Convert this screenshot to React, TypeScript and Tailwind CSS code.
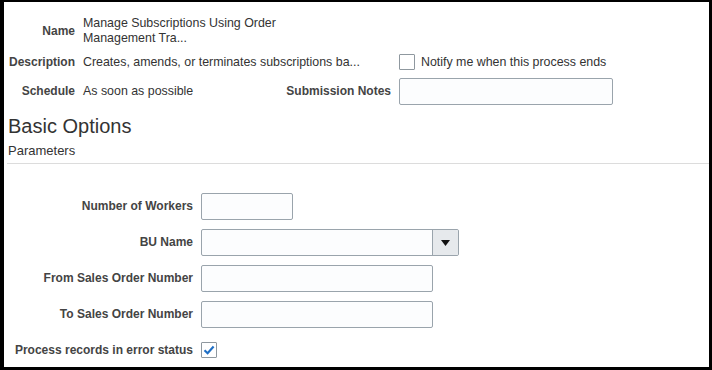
import React from 'react';

const font = { fontFamily: '"Liberation Sans", Arial, sans-serif' };

function TextBox({ className = '' }: { className?: string }) {
  return <div className={`h-[27px] rounded-[2px] border border-[#9aa4ac] bg-[#fcfdfe] ${className}`} />;
}

function Checkbox({ checked = false }: { checked?: boolean }) {
  return (
    <div className="flex h-4 w-4 items-center justify-center rounded-[1px] border border-[#8f989f] bg-white">
      {checked && (
        <svg width="12" height="10" viewBox="0 0 12 10">
          <path d="M1.5 5.2 L4.6 8.2 L10.6 1.6" fill="none" stroke="#1f6fc5" strokeWidth="2.2" />
        </svg>
      )}
    </div>
  );
}

function Label({ children }: { children: React.ReactNode }) {
  return <div className="text-right text-[12px] font-bold text-[#444]">{children}</div>;
}

export default function App() {
  return (
    <div
      style={font}
      className="box-border h-[370px] w-[712px] overflow-hidden border-t-2 border-r-[3px] border-b-[3px] border-l-4 border-black bg-white text-[12.4px] leading-[15px] text-[#333]"
    >
      {/* header info */}
      <div className="flex flex-col gap-[8px] pt-[14px]">
        <div className="flex items-center gap-2">
          <div className="w-[71px]">
            <Label>Name</Label>
          </div>
          <div className="w-[210px]">
            Manage Subscriptions Using Order
            <br />
            Management Tra...
          </div>
        </div>
        <div className="flex items-center gap-2">
          <div className="w-[71px]">
            <Label>Description</Label>
          </div>
          <div className="w-[308px] whitespace-nowrap">Creates, amends, or terminates subscriptions ba...</div>
          <Checkbox />
          <span className="ml-[-2px]">Notify me when this process ends</span>
        </div>
        <div className="flex items-center gap-2">
          <div className="w-[71px]">
            <Label>Schedule</Label>
          </div>
          <div className="flex w-[308px] items-center justify-between">
            <span>As soon as possible</span>
            <Label>Submission Notes</Label>
          </div>
          <TextBox className="w-[214px]" />
        </div>
      </div>

      {/* basic options */}
      <div className="mt-[10px] pl-[4px] text-[20px] leading-[23px] text-[#333]">Basic Options</div>
      <div className="mt-[6px] pl-[4px] text-[13px] leading-[14px]">Parameters</div>
      <div className="ml-[3px] mt-[5px] border-b border-[#dcdcdc]" />

      <div className="mt-[29px] grid grid-cols-[189px_auto] items-center gap-x-2 gap-y-[9px]">
        <Label>Number of Workers</Label>
        <TextBox className="w-[92px]" />

        <Label>BU Name</Label>
        <div className="flex h-[27px] w-[258px] rounded-[2px] border border-[#9aa4ac] bg-[#fcfdfe]">
          <div className="flex-1" />
          <div className="flex w-[26px] items-center justify-center rounded-r-[2px] border-l border-[#9aa4ac] bg-[#e6e9ec]">
            <svg width="9" height="6" viewBox="0 0 9 6">
              <path d="M0 0 H9 L4.5 6 Z" fill="#111" />
            </svg>
          </div>
        </div>

        <Label>From Sales Order Number</Label>
        <TextBox className="w-[232px]" />

        <Label>To Sales Order Number</Label>
        <TextBox className="w-[232px]" />

        <Label>Process records in error status</Label>
        <div className="flex h-[26px] items-center">
          <Checkbox checked />
        </div>
      </div>
    </div>
  );
}
